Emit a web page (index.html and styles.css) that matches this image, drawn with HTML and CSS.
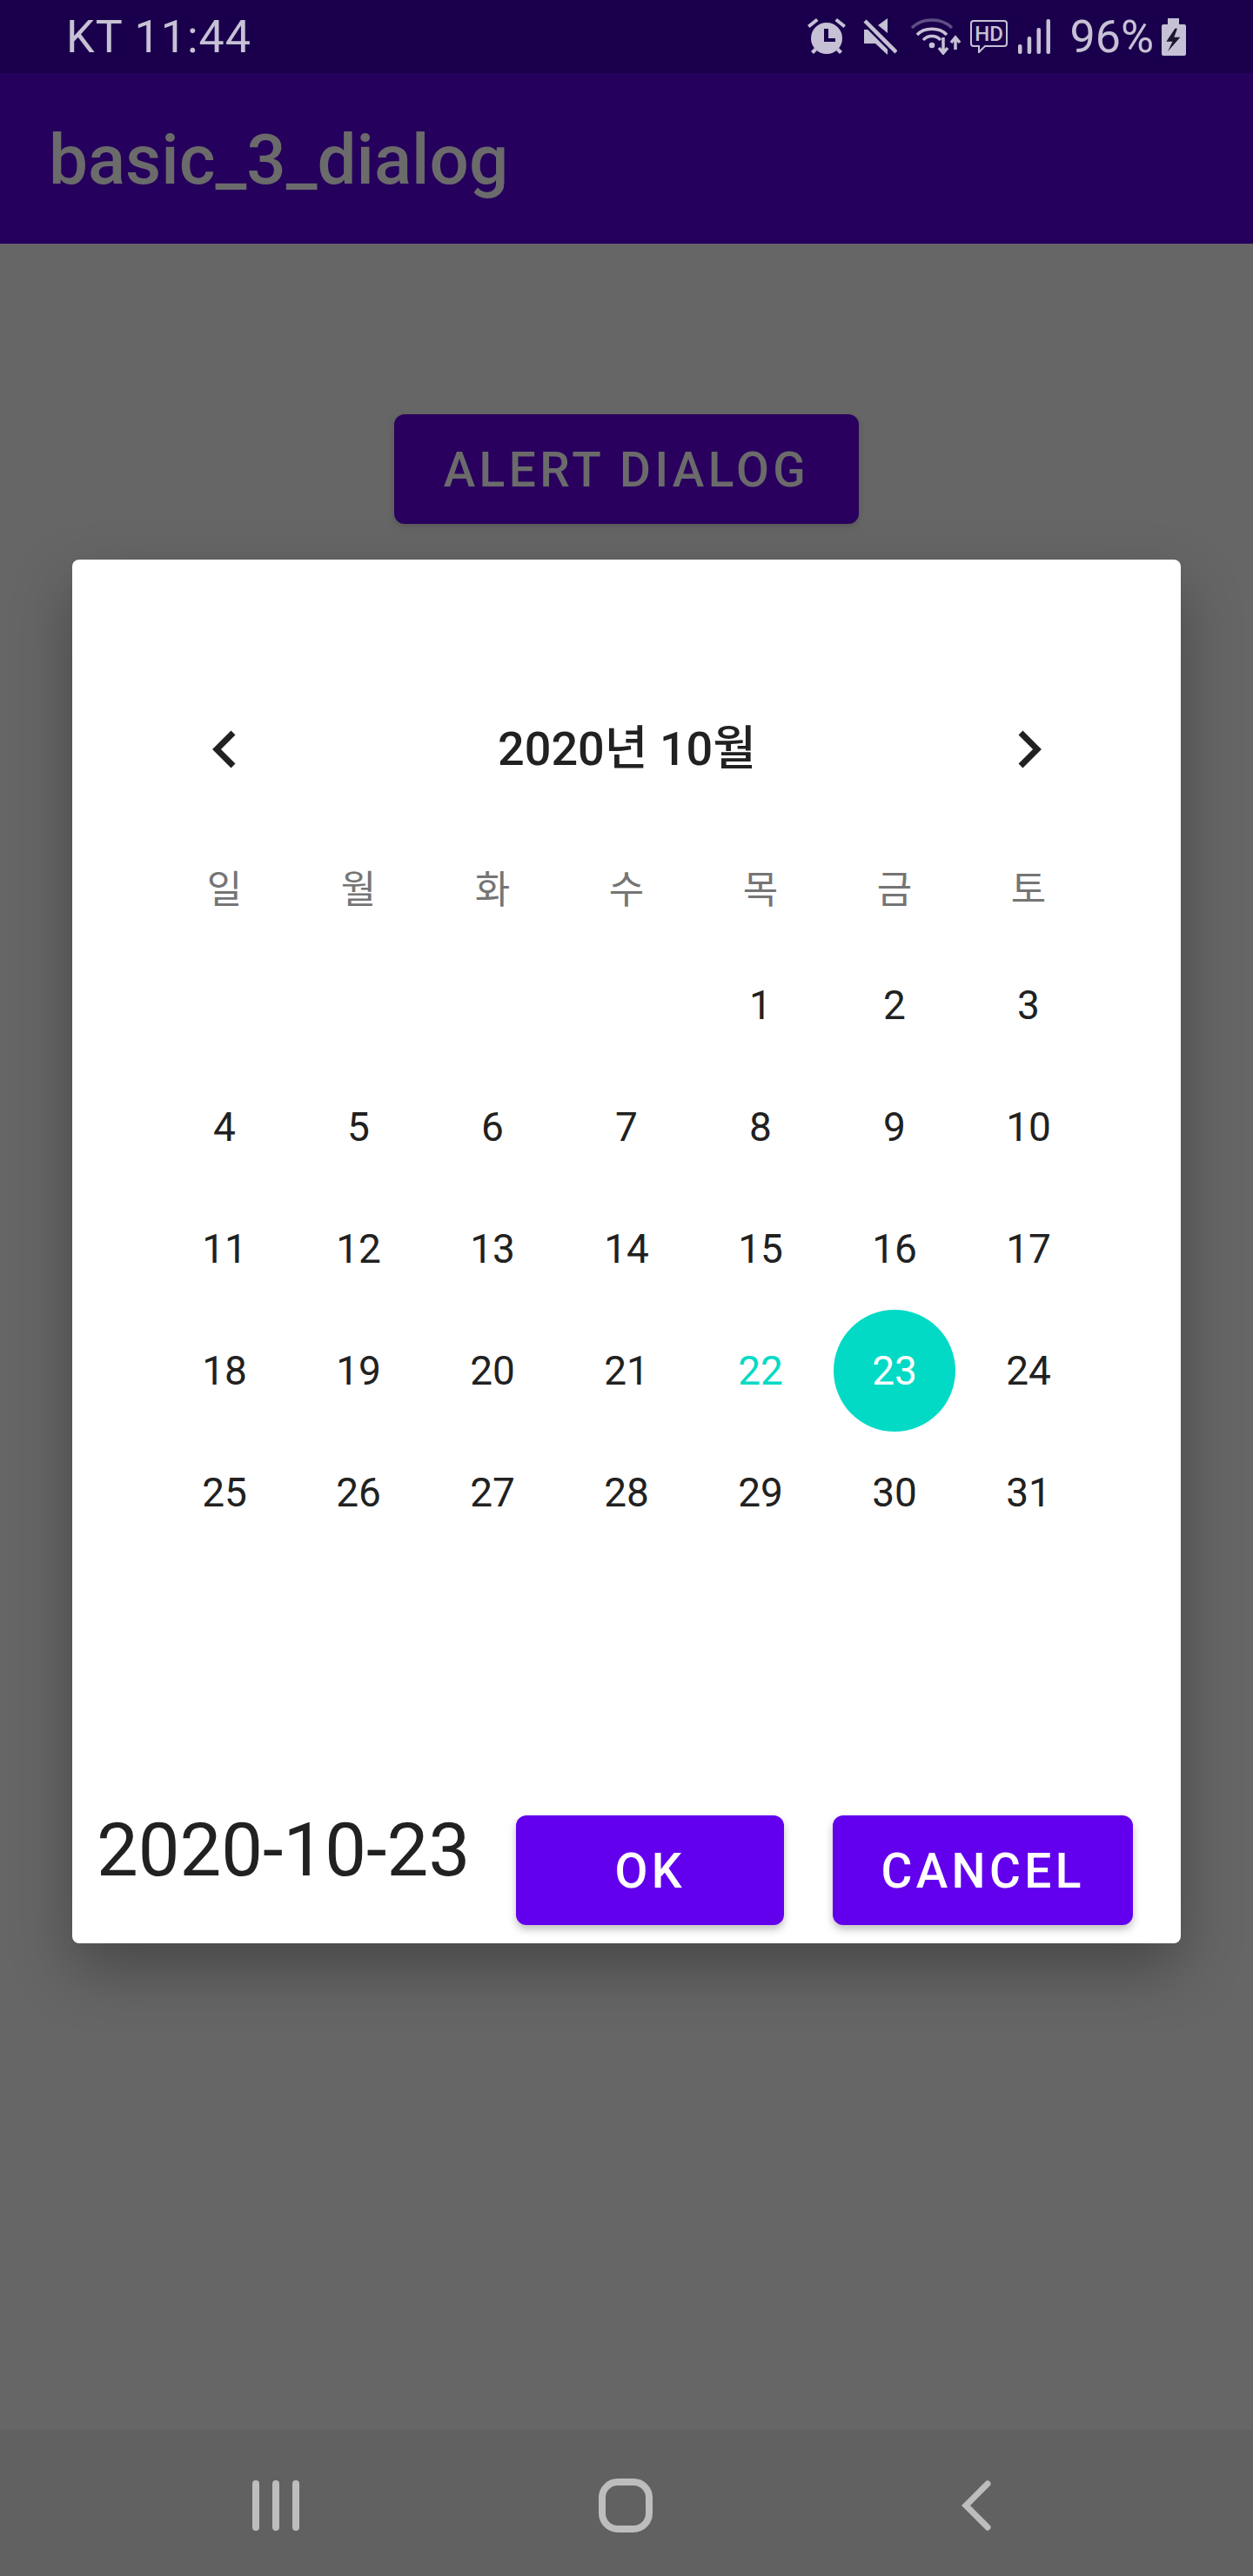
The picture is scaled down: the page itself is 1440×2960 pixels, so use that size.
FILE: index.html
```html
<!DOCTYPE html>
<html lang="ko">

<head>
    <meta charset="UTF-8">
    <meta name="viewport" content="width=device-width, initial-scale=1.0">
    <title>basic_3_dialog</title>
    <link rel="stylesheet" href="styles.css">
</head>

<body>

    <div class="screen">
        <div class="status-bar">
            <span class="status-left">KT 11:44</span>
            <div class="status-right">
                <!-- alarm -->
                <svg class="ic-alarm" width="44" height="42" viewBox="0 0 44 42" fill="#c6c1d4">
                    <circle cx="22" cy="23" r="18" />
                    <path d="M0 8 L10 0 L12.500 3 L2.500 11Z M44 8 L34 0 L31.500 3 L41.500 11Z M4 38 L8 34 L11 37 L7 41Z M40 38 L36 34 L33 37 L37 41Z" />
                    <path d="M19 12 H24 V23 H32 V27 H19Z" fill="#1a004c" />
                </svg>
                <!-- mute -->
                <svg class="ic-mute" width="39" height="42" viewBox="0 0 39 42" fill="#c6c1d4">
                    <path d="M1 13 H10 L28 32 V42 L14 29 H1Z M28 0 V17 L17 8Z" />
                    <path d="M1 3 L38 40" stroke="#1a004c" stroke-width="8" />
                    <path d="M2 3 L38 39" stroke="#c6c1d4" stroke-width="4.500" />
                </svg>
                <!-- wifi -->
                <svg class="ic-wifi" width="57" height="42" viewBox="0 0 57 42" fill="none" stroke="#c6c1d4" stroke-width="3.500">
                    <path d="M1 11 C13 -1 35 -1 47 11" stroke="#5f4f86" />
                    <path d="M7 19 C15 10 33 10 41 19" />
                    <path d="M14 25 C19 19 29 19 34 25" />
                    <circle cx="24" cy="31" r="3.300" fill="#c6c1d4" stroke="none" />
                    <path d="M37 22 V39 M32 34 L37 40 L42 34 M51 36 V23 M46 28 L51 22 L56 28" />
                </svg>
                <!-- hd bubble -->
                <svg class="ic-hd" width="43" height="38" viewBox="0 0 43 38">
                    <path d="M4 1 H39 Q42 1 42 4 V27 Q42 30 39 30 H17 L10 37 V30 H4 Q1 30 1 27 V4 Q1 1 4 1Z" fill="none" stroke="#c6c1d4" stroke-width="2" />
                    <text x="21.500" y="24" text-anchor="middle" class="hd-text">HD</text>
                </svg>
                <!-- signal -->
                <svg class="ic-signal" width="37" height="40" viewBox="0 0 37 40" fill="#c6c1d4">
                    <rect x="0" y="29" width="4.500" height="11" rx="2" />
                    <rect x="10.700" y="20" width="4.500" height="20" rx="2" />
                    <rect x="21.500" y="10" width="4.500" height="30" rx="2" />
                    <rect x="32.500" y="0" width="4.500" height="40" rx="2" />
                </svg>
                <span class="status-pct">96%</span>
                <!-- battery -->
                <svg class="ic-batt" width="28" height="43" viewBox="0 0 28 43">
                    <path d="M7 0 H20 V7 H26 Q28 7 28 9 V41 Q28 43 26 43 H2 Q0 43 0 41 V9 Q0 7 2 7 H7Z" fill="#c6c1d4" />
                    <path d="M15.400 11.700 L5.400 26.700 H12.500 L7 38.300 L21.400 21.700 H14.300 L18 11.700Z" fill="#1e1530" />
                </svg>
            </div>
        </div>

        <div class="app-bar">basic_3_dialog</div>

        <div class="content">
            <div class="alert-btn">ALERT DIALOG</div>

            <div class="dialog">
                <div class="cal-head">
                    <svg width="32" height="48" viewBox="0 0 32 48" fill="none" stroke="#212121" stroke-width="7">
                        <path d="M27 5 L8 24 L27 43" />
                    </svg>
                    <span class="cal-title">2020년 10월</span>
                    <svg width="32" height="48" viewBox="0 0 32 48" fill="none" stroke="#212121" stroke-width="7">
                        <path d="M5 5 L24 24 L5 43" />
                    </svg>
                </div>

                <div class="week-row">
                    <span>일</span><span>월</span><span>화</span><span>수</span><span>목</span><span>금</span><span>토</span>
                </div>

                <div class="days">
                    <span></span><span></span><span></span><span></span><span>1</span><span>2</span><span>3</span>
                    <span>4</span><span>5</span><span>6</span><span>7</span><span>8</span><span>9</span><span>10</span>
                    <span>11</span><span>12</span><span>13</span><span>14</span><span>15</span><span>16</span><span>17</span>
                    <span>18</span><span>19</span><span>20</span><span>21</span><span class="today">22</span><span class="selected">23</span><span>24</span>
                    <span>25</span><span>26</span><span>27</span><span>28</span><span>29</span><span>30</span><span>31</span>
                </div>

                <div class="dialog-foot">
                    <span class="picked-date">2020-10-23</span>
                    <div class="btn btn-ok">OK</div>
                    <div class="btn btn-cancel">CANCEL</div>
                </div>
            </div>
        </div>

        <div class="nav-bar">
            <svg class="nav-recent" width="54" height="58" viewBox="0 0 54 58" fill="#bdbdbd">
                <rect x="0" y="0" width="8" height="58" rx="4" />
                <rect x="23" y="0" width="8" height="58" rx="4" />
                <rect x="46" y="0" width="8" height="58" rx="4" />
            </svg>
            <svg class="nav-home" width="62" height="62" viewBox="0 0 62 62" fill="none" stroke="#bdbdbd" stroke-width="8">
                <rect x="4" y="4" width="54" height="54" rx="18" />
            </svg>
            <svg class="nav-back" width="34" height="58" viewBox="0 0 34 58" fill="none" stroke="#bdbdbd" stroke-width="7" stroke-linecap="round">
                <path d="M30 4 L5 29 L30 54" />
            </svg>
        </div>
    </div>

</body>

</html>
```

FILE: styles.css
```css
* {
    box-sizing: border-box;
}

body {
    margin: 0;
    font-family: Roboto, "Noto Sans CJK KR", sans-serif;
    background-color: #666666;
}

.screen {
    display: flex;
    flex-direction: column;
    width: 1440px;
    height: 2960px;
    overflow: hidden;
}

.status-bar {
    display: flex;
    justify-content: space-between;
    align-items: center;
    height: 84px;
    padding: 0 77px 0 76px;
    background-color: #1a004c;
    color: #c6c1d4;
    flex-shrink: 0;
}

.status-left {
    font-size: 52px;
    letter-spacing: 1px;
}

.status-right {
    display: flex;
    align-items: center;
}

.ic-mute {
    margin-left: 20px;
}

.ic-wifi {
    margin-left: 16px;
}

.ic-hd {
    margin-left: 11px;
}

.ic-signal {
    margin-left: 12px;
}

.status-pct {
    margin-left: 22px;
    font-size: 52px;
}

.ic-batt {
    margin-left: 9px;
}

.hd-text {
    font-family: Roboto, sans-serif;
    font-size: 24px;
    font-weight: 500;
    fill: #c6c1d4;
}

.app-bar {
    display: flex;
    align-items: center;
    height: 196px;
    padding: 4px 0 0 56px;
    background-color: #25005c;
    color: #6b6b6b;
    font-size: 80px;
    font-weight: 500;
    flex-shrink: 0;
}

.content {
    flex: 1;
    display: flex;
    flex-direction: column;
    align-items: center;
    padding-top: 196px;
    background-color: #666666;
}

.alert-btn {
    display: flex;
    align-items: center;
    justify-content: center;
    width: 534px;
    height: 126px;
    padding-top: 2px;
    border-radius: 12px;
    background-color: #29005e;
    color: #6b6b6b;
    font-size: 55px;
    font-weight: 500;
    letter-spacing: 4.400px;
    box-shadow: 0 3px 8px rgba(0, 0, 0, 0.15);
}

.dialog {
    display: flex;
    flex-direction: column;
    width: 1274px;
    height: 1590px;
    margin-top: 41px;
    background-color: #ffffff;
    border-radius: 8px;
    box-shadow: 0 30px 70px rgba(0, 0, 0, 0.3);
}

.cal-head {
    display: flex;
    justify-content: space-between;
    align-items: center;
    height: 48px;
    margin-top: 194px;
    padding: 0 157px 0 158px;
}

.cal-title {
    font-size: 54px;
    line-height: 48px;
    font-weight: 500;
    color: #212121;
}

.week-row,
.days {
    display: grid;
    grid-template-columns: repeat(7, 154px);
    padding-left: 98px;
}

.week-row {
    margin-top: 99px;
    height: 70px;
    align-items: center;
    font-size: 44px;
    color: #757575;
}

.week-row span,
.days span {
    text-align: center;
}

.days {
    grid-auto-rows: 140px;
    margin-top: 31px;
    font-size: 46px;
    color: #212121;
}

.days span {
    display: flex;
    align-items: center;
    justify-content: center;
}

.days .today {
    color: #03dac5;
}

.days .selected {
    width: 140px;
    height: 140px;
    justify-self: center;
    border-radius: 50%;
    background-color: #03dac5;
    color: #ffffff;
}

.dialog-foot {
    display: flex;
    align-items: flex-start;
    margin-top: auto;
    padding: 0 0 21px 28px;
}

.picked-date {
    font-size: 85px;
    line-height: 80px;
    color: #212121;
}

.btn {
    display: flex;
    align-items: center;
    justify-content: center;
    height: 126px;
    padding-top: 2px;
    border-radius: 12px;
    background-color: #6200ee;
    color: #ffffff;
    font-size: 55px;
    font-weight: 500;
    letter-spacing: 4.400px;
    box-shadow: 0 5px 10px rgba(0, 0, 0, 0.25);
}

.btn-ok {
    width: 308px;
    margin-left: 53px;
}

.btn-cancel {
    width: 345px;
    margin-left: 56px;
}

.nav-bar {
    display: flex;
    align-items: center;
    height: 168px;
    padding: 6px 0 0 290px;
    background-color: #616161;
    flex-shrink: 0;
}

.nav-home {
    margin-left: 344px;
}

.nav-back {
    margin-left: 355px;
}
```
